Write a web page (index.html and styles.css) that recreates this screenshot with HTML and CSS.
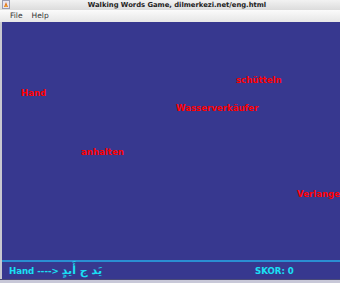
FILE: index.html
```html
<!DOCTYPE html>
<html>
<head>
<meta charset="utf-8">
<link rel="stylesheet" href="styles.css">
</head>
<body>
<div class="window">
  <div class="titlebar">
    <svg class="appicon" width="8" height="9" viewBox="0 0 8 9">
      <rect x="0.5" y="0.5" width="7" height="8" fill="#e8e4f0" stroke="#9a9ab0" stroke-width="1"/>
      <path d="M2 7 L4 2 L6 7 Z" fill="#e07020"/>
      <path d="M3 7 L4 4 L5 7 Z" fill="#f0b030"/>
    </svg>
    <span class="title">Walking Words Game, dilmerkezi.net/eng.html</span>
  </div>
  <div class="menubar">
    <span class="menu">File</span>
    <span class="menu">Help</span>
  </div>
  <div class="game">
    <div class="canvas">
      <span class="word" style="left:19px;top:66px">Hand</span>
      <span class="word" style="left:79px;top:125px">anhalten</span>
      <span class="word" style="left:234px;top:53px">schütteln</span>
      <span class="word" style="left:174px;top:81px">Wasserverkäufer</span>
      <span class="word" style="left:295px;top:167px">Verlange</span>
    </div>
    <div class="status">
      <span class="question">Hand ----&gt; <span class="arabic" dir="rtl">يَد ج أَيدٍ</span></span>
      <span class="score">SKOR: 0</span>
    </div>
  </div>
  <div class="bottom"></div>
</div>
</body>
</html>
```
FILE: styles.css
```css
html, body {
  margin: 0;
  padding: 0;
  background: #d8d8d8;
}
.window {
  width: 340px;
  height: 283px;
  display: flex;
  flex-direction: column;
  overflow: hidden;
  font-family: "DejaVu Sans", sans-serif;
}
.titlebar {
  height: 10px;
  flex: none;
  position: relative;
  display: flex;
  align-items: center;
  justify-content: center;
  background: linear-gradient(#f2f2f2, #dcdcdc);
}
.appicon {
  position: absolute;
  left: 2px;
  top: 0;
}
.title {
  font-size: 6.8px;
  font-weight: bold;
  color: #222;
  line-height: 10px;
  padding-left: 14px;
}
.menubar {
  height: 12px;
  flex: none;
  display: flex;
  align-items: center;
  gap: 9px;
  padding-left: 10px;
  background: linear-gradient(#fbfbfb, #e6e6e6);
}
.menu {
  font-size: 7.5px;
  color: #333;
  line-height: 12px;
}
.game {
  flex: 1;
  display: flex;
  flex-direction: column;
  background: #37388f;
  border-left: 2px solid #c8c8d0;
}
.canvas {
  flex: 1;
  position: relative;
}
.word {
  position: absolute;
  color: #ff0000;
  font-weight: bold;
  font-size: 8.6px;
  line-height: 11px;
  white-space: nowrap;
}
.status {
  height: 17px;
  flex: none;
  border-top: 2px solid #2a8ed2;
  display: flex;
  align-items: center;
  padding-left: 7px;
  color: #19e0f5;
  font-weight: bold;
  font-size: 8.6px;
}
.question {
  width: 246px;
  white-space: nowrap;
}
.arabic {
  font-weight: bold;
  font-size: 11px;
}
.score {
  white-space: nowrap;
}
.bottom {
  height: 3px;
  flex: none;
  border-top: 1px solid #4a4a78;
  background: #c8c8d8;
}
```
